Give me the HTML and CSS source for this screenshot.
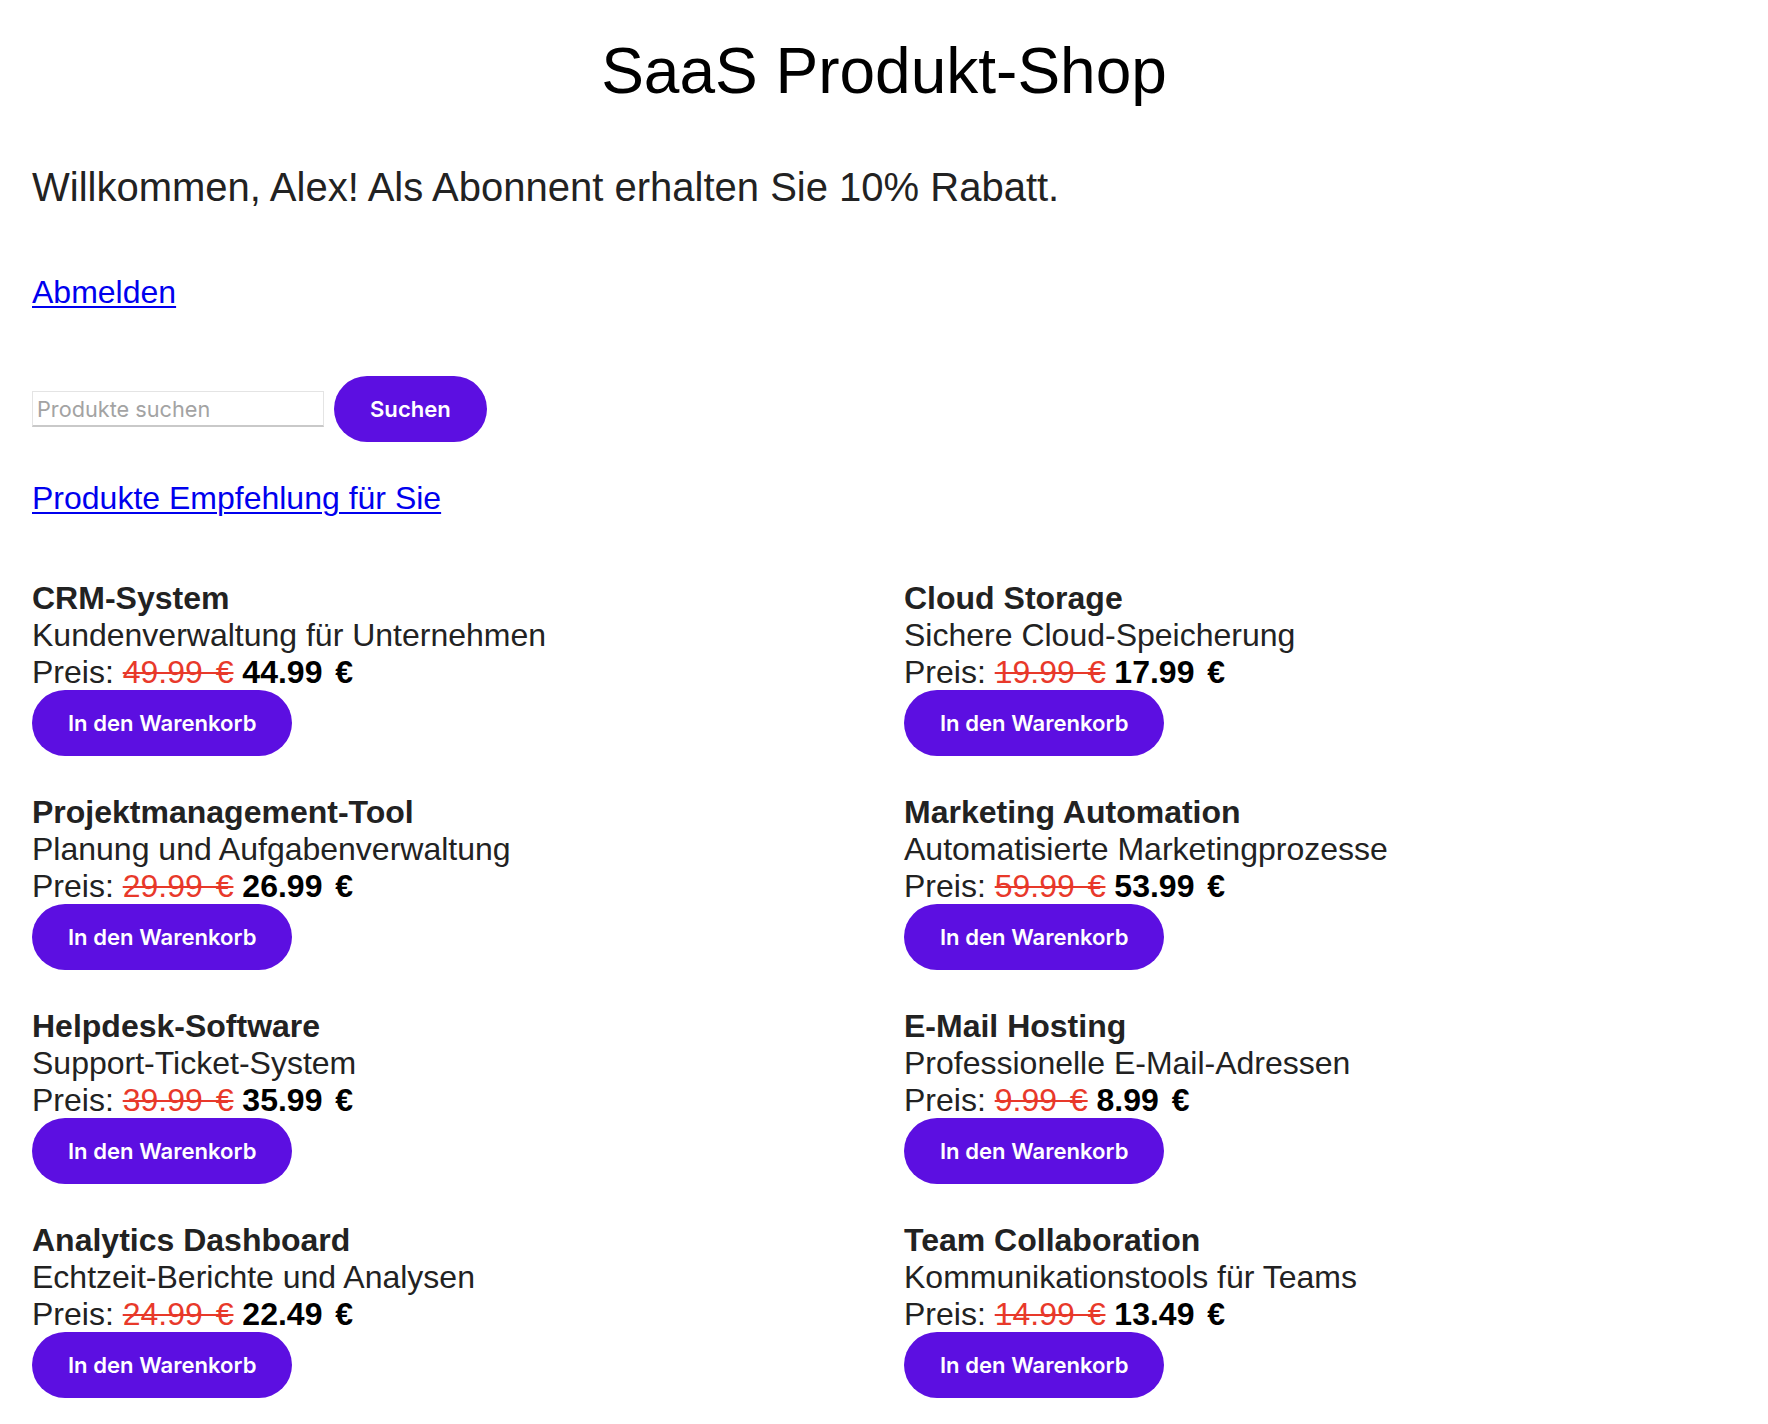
FILE: index.html
```html
<!DOCTYPE html>
<html lang="de">
<head>
<meta charset="utf-8">
<title>SaaS Produkt-Shop</title>
<link rel="stylesheet" href="styles.css">
</head>
<body>
<h1 class="title">SaaS Produkt-Shop</h1>
<p class="welcome">Willkommen, Alex! Als Abonnent erhalten Sie 10% Rabatt.</p>
<a class="link logout" href="#">Abmelden</a>
<form class="search" onsubmit="return false">
  <input class="search-input" type="text" placeholder="Produkte suchen">
  <button class="btn" type="submit">Suchen</button>
</form>
<a class="link rec" href="#">Produkte Empfehlung für Sie</a>
<div class="products">
  <div class="card">
    <div class="name">CRM-System</div>
    <div class="desc">Kundenverwaltung für Unternehmen</div>
    <div class="price">Preis: <span class="old">49.99 €</span> <span class="new">44.99 €</span></div>
    <button class="btn">In den Warenkorb</button>
  </div>
  <div class="card">
    <div class="name">Cloud Storage</div>
    <div class="desc">Sichere Cloud-Speicherung</div>
    <div class="price">Preis: <span class="old">19.99 €</span> <span class="new">17.99 €</span></div>
    <button class="btn">In den Warenkorb</button>
  </div>
  <div class="card">
    <div class="name">Projektmanagement-Tool</div>
    <div class="desc">Planung und Aufgabenverwaltung</div>
    <div class="price">Preis: <span class="old">29.99 €</span> <span class="new">26.99 €</span></div>
    <button class="btn">In den Warenkorb</button>
  </div>
  <div class="card">
    <div class="name">Marketing Automation</div>
    <div class="desc">Automatisierte Marketingprozesse</div>
    <div class="price">Preis: <span class="old">59.99 €</span> <span class="new">53.99 €</span></div>
    <button class="btn">In den Warenkorb</button>
  </div>
  <div class="card">
    <div class="name">Helpdesk-Software</div>
    <div class="desc">Support-Ticket-System</div>
    <div class="price">Preis: <span class="old">39.99 €</span> <span class="new">35.99 €</span></div>
    <button class="btn">In den Warenkorb</button>
  </div>
  <div class="card">
    <div class="name">E-Mail Hosting</div>
    <div class="desc">Professionelle E-Mail-Adressen</div>
    <div class="price">Preis: <span class="old">9.99 €</span> <span class="new">8.99 €</span></div>
    <button class="btn">In den Warenkorb</button>
  </div>
  <div class="card">
    <div class="name">Analytics Dashboard</div>
    <div class="desc">Echtzeit-Berichte und Analysen</div>
    <div class="price">Preis: <span class="old">24.99 €</span> <span class="new">22.49 €</span></div>
    <button class="btn">In den Warenkorb</button>
  </div>
  <div class="card">
    <div class="name">Team Collaboration</div>
    <div class="desc">Kommunikationstools für Teams</div>
    <div class="price">Preis: <span class="old">14.99 €</span> <span class="new">13.49 €</span></div>
    <button class="btn">In den Warenkorb</button>
  </div>
</div>
</body>
</html>
```

FILE: styles.css
```css
html, body {
  background: #ffffff;
}
body {
  margin: 0;
  padding: 0 32px 40px;
  font-family: "Liberation Sans", Arial, Helvetica, sans-serif;
  color: #222222;
}
.title {
  margin: 34px 0 0;
  font-size: 64px;
  line-height: 74px;
  font-weight: 400;
  text-align: center;
  color: #000000;
}
.welcome {
  margin: 56px 0 0;
  font-size: 40px;
  line-height: 46px;
}
.link {
  display: block;
  width: max-content;
  font-size: 32px;
  line-height: 37px;
  color: #0000ee;
  text-decoration: underline;
  text-underline-offset: 3px;
  text-decoration-thickness: 2px;
}
.logout {
  margin-top: 64px;
}
.search {
  margin: 65px 0 0;
  display: flex;
  align-items: center;
  gap: 10px;
}
.search-input {
  box-sizing: border-box;
  width: 292px;
  height: 36px;
  margin: 0;
  padding: 0 4px;
  border: 1px solid #e4e4e4;
  border-bottom: 2px solid #c9c9c9;
  border-radius: 0;
  font-family: Inter, "Noto Sans", sans-serif;
  font-size: 21.7px;
  color: #222;
  outline: none;
}
.search-input::placeholder {
  color: #a3a3a3;
}
.btn {
  height: 66px;
  padding: 0 36px;
  margin: 0;
  border: none;
  border-radius: 33px;
  background: #5c0fe1;
  color: #ffffff;
  font-family: Inter, "Noto Sans", sans-serif;
  font-weight: 600;
  font-size: 22.1px;
  cursor: pointer;
}
.rec {
  margin-top: 38px;
}
.products {
  margin-top: 63px;
  display: grid;
  grid-template-columns: 1fr 1fr;
  column-gap: 40px;
  row-gap: 37.6px;
}
.card {
  display: flex;
  flex-direction: column;
  align-items: flex-start;
  font-size: 32px;
  line-height: 36.8px;
}
.name {
  font-weight: 700;
}
.old {
  color: #e8392a;
  text-decoration: line-through;
  text-decoration-thickness: 2px;
  word-spacing: 4px;
}
.new {
  font-weight: 700;
  color: #000000;
  word-spacing: 4px;
}
```
